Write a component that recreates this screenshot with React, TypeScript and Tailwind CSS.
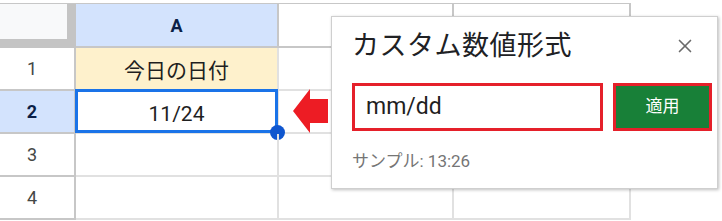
import { X } from "lucide-react"

const cjk = { fontFamily: 'Roboto, "Noto Sans CJK JP", sans-serif' }

function RowHeader({ n, active }: { n: number; active?: boolean }) {
  return (
    <div
      className={`w-[76px] h-full flex items-center justify-center pr-[10px] border-r-2 border-[#c7c7c7] text-[18px] ${
        active ? "bg-[#d3e3fd] font-bold text-[#0b1f47]" : "text-[#444746]"
      }`}
    >
      {n}
    </div>
  )
}

function Row({ n, children, active }: { n: number; children?: React.ReactNode; active?: boolean }) {
  return (
    <div className="flex h-[43px]">
      <div className="border-b-2 border-[#c7c7c7]">
        <RowHeader n={n} active={active} />
      </div>
      <div className="relative w-[203px] border-r-2 border-b-2 border-[#e1e1e1]">{children}</div>
      <div className="w-[175px] border-r-2 border-b-2 border-[#e1e1e1]" />
      <div className="w-[177px] border-r-2 border-b-2 border-[#e1e1e1]" />
    </div>
  )
}

export default function App() {
  return (
    <div className="relative w-[722px] h-[221px] bg-white overflow-hidden" style={cjk}>
      {/* grid */}
      <div className="pt-[3px]">
        <div className="flex h-[45px] border-t border-[#c7c7c7] w-[631px]">
          <div className="w-[76px] bg-[#f8f9fa] border-r-[9px] border-b-[9px] border-[#c4c4c4]" />
          <div className="w-[203px] bg-[#d3e3fd] border-r-2 border-b-2 border-[#c7c7c7] flex items-center justify-center text-[18px] font-bold text-[#0b1f47]">
            A
          </div>
          <div className="w-[175px] border-r-2 border-b-2 border-[#c7c7c7]" />
          <div className="w-[177px] border-r-2 border-b-2 border-[#c7c7c7]" />
        </div>
        <Row n={1}>
          <div className="h-full bg-[#fef1cc] flex items-center justify-center pt-[6px] text-[21px] text-[#1f1f1f]">
            今日の日付
          </div>
        </Row>
        <Row n={2} active>
          <div className="h-full flex items-center justify-center pt-[6px] text-[21px] text-[#1f1f1f]">11/24</div>
          <div className="absolute -left-px -top-[2px] w-[203px] h-[44px] border-[3px] border-[#1a73e8]" />
          <div className="absolute left-[194px] top-[34px] w-[15px] h-[15px] rounded-full bg-[#0f56cf]" />
        </Row>
        <Row n={3} />
        <Row n={4} />
      </div>

      {/* arrow */}
      <svg className="absolute left-[293px] top-[89px]" width="35" height="44" viewBox="0 0 35 44">
        <polygon points="0,22 17,0 17,10 35,10 35,34 17,34 17,44" fill="#ed1c24" />
      </svg>

      {/* dialog */}
      <div className="absolute left-[331px] top-[16px] w-[387px] h-[173px] bg-white border border-[#cfcfcf] shadow-[1px_1px_3px_rgba(0,0,0,0.25)] pl-[20px] pr-[5px]">
        <div className="flex h-[58px] items-center justify-between">
          <div className="text-[27px] text-[#202124] tracking-[0.5px]">カスタム数値形式</div>
          <X className="mr-[16px] text-[#6b6b6b]" size={22} strokeWidth={1.8} />
        </div>
        <div className="mt-[8px] flex gap-[10px]">
          <div className="w-[251px] h-[48px] border-[3px] border-[#e5202a] flex items-center pl-[11px] text-[23px] text-[#1f1f1f]">
            mm/dd
          </div>
          <div className="w-[99px] h-[48px] border-[3px] border-[#e5202a] bg-[#188038] flex items-center justify-center text-[17px] text-white">
            適用
          </div>
        </div>
        <div className="mt-[21px] h-[20px] flex items-center text-[17px] text-[#757575]">サンプル: 13:26</div>
      </div>
    </div>
  )
}
